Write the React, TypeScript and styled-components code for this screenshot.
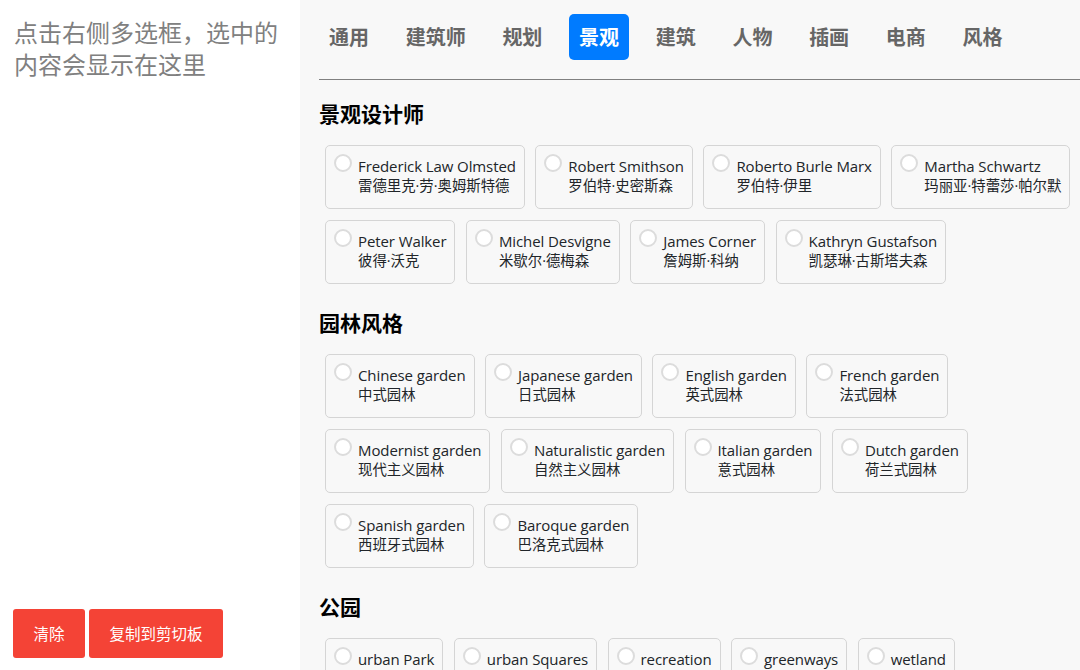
import React from 'react'
import styled, { createGlobalStyle } from 'styled-components'

type Option = {
  en: string
  zh: string
}

type Section = {
  title: string
  options: Option[]
}

const TABS = ['通用', '建筑师', '规划', '景观', '建筑', '人物', '插画', '电商', '风格']

const SECTIONS: Section[] = [
  {
    title: '景观设计师',
    options: [
      { en: 'Frederick Law Olmsted', zh: '雷德里克·劳·奥姆斯特德' },
      { en: 'Robert Smithson', zh: '罗伯特·史密斯森' },
      { en: 'Roberto Burle Marx', zh: '罗伯特·伊里' },
      { en: 'Martha Schwartz', zh: '玛丽亚·特蕾莎·帕尔默' },
      { en: 'Peter Walker', zh: '彼得·沃克' },
      { en: 'Michel Desvigne', zh: '米歇尔·德梅森' },
      { en: 'James Corner', zh: '詹姆斯·科纳' },
      { en: 'Kathryn Gustafson', zh: '凯瑟琳·古斯塔夫森' },
    ],
  },
  {
    title: '园林风格',
    options: [
      { en: 'Chinese garden', zh: '中式园林' },
      { en: 'Japanese garden', zh: '日式园林' },
      { en: 'English garden', zh: '英式园林' },
      { en: 'French garden', zh: '法式园林' },
      { en: 'Modernist garden', zh: '现代主义园林' },
      { en: 'Naturalistic garden', zh: '自然主义园林' },
      { en: 'Italian garden', zh: '意式园林' },
      { en: 'Dutch garden', zh: '荷兰式园林' },
      { en: 'Spanish garden', zh: '西班牙式园林' },
      { en: 'Baroque garden', zh: '巴洛克式园林' },
    ],
  },
  {
    title: '公园',
    options: [
      { en: 'urban Park', zh: '城市公园' },
      { en: 'urban Squares', zh: '城市广场' },
      { en: 'recreation', zh: '休闲娱乐' },
      { en: 'greenways', zh: '绿道' },
      { en: 'wetland', zh: '湿地' },
    ],
  },
]

const GlobalStyle = createGlobalStyle`
  html, body {
    margin: 0;
    height: 100%;
    overflow: hidden;
    background: #fff;
  }
  body {
    font-family: "Open Sans", "Noto Sans CJK SC", sans-serif;
  }
`

const Page = styled.div`
  display: flex;
  width: 1080px;
  height: 670px;
  overflow: hidden;
`

const Sidebar = styled.aside`
  display: flex;
  flex-direction: column;
  justify-content: space-between;
  flex: 0 0 300px;
  box-sizing: border-box;
  padding: 17px 13px 12px;
  background: #fff;
`

const Hint = styled.div`
  margin-left: 1px;
  color: #808080;
  font-size: 24px;
  line-height: 32px;
`

const Actions = styled.div`
  display: flex;
  gap: 4px;
`

const RedButton = styled.button`
  height: 49px;
  padding: 0 20.5px;
  border: 0;
  border-radius: 3px;
  background: #f44336;
  color: #fff;
  font-family: inherit;
  font-size: 15.5px;
`

const Main = styled.main`
  flex: 1;
  box-sizing: border-box;
  padding: 14px 0 0 19px;
  background: #f8f8f8;
`

const TabBar = styled.nav`
  display: flex;
  gap: 16.7px;
  height: 66px;
  box-sizing: border-box;
  border-bottom: 1px solid #808080;
`

const Tab = styled.div<{ $active?: boolean }>`
  box-sizing: border-box;
  height: 46px;
  padding: 0 10px;
  border-radius: 5px;
  background: ${({ $active }) => ($active ? '#007bff' : 'transparent')};
  color: ${({ $active }) => ($active ? '#fff' : '#666')};
  font-size: 20px;
  font-weight: 700;
  line-height: 47px;
`

const Group = styled.section`
  margin-top: 17px;

  & + & {
    margin-top: 22px;
  }
`

const Heading = styled.h2`
  margin: 0 0 14px;
  color: #000;
  font-size: 21px;
  font-weight: 700;
  line-height: 34px;
`

const Options = styled.div`
  display: flex;
  flex-wrap: wrap;
  gap: 11px 10.5px;
  padding-left: 6px;
`

const Card = styled.label`
  display: flex;
  box-sizing: border-box;
  height: 64px;
  padding: 8px 8px 0;
  border: 1px solid #d5d5d5;
  border-radius: 5px;
`

const Check = styled.input`
  flex: none;
  box-sizing: border-box;
  width: 18px;
  height: 18px;
  margin: 0 6px 0 0;
  border: 2px solid #dcdcdc;
  border-radius: 50%;
  background: #fff;
  appearance: none;
`

const Names = styled.div`
  padding-top: 3px;
  color: #212529;
`

const English = styled.div`
  font-size: 15px;
  letter-spacing: -0.1px;
  line-height: 19px;
  white-space: nowrap;
`

const Chinese = styled.div`
  font-size: 14.4px;
  line-height: 20px;
  white-space: nowrap;
`

const App: React.FC = () => {
  return (
    <Page>
      <GlobalStyle />
      <Sidebar>
        <Hint>点击右侧多选框，选中的内容会显示在这里</Hint>
        <Actions>
          <RedButton>清除</RedButton>
          <RedButton>复制到剪切板</RedButton>
        </Actions>
      </Sidebar>
      <Main>
        <TabBar>
          {TABS.map(tab => (
            <Tab key={tab} $active={tab === '景观'}>
              {tab}
            </Tab>
          ))}
        </TabBar>
        {SECTIONS.map(section => (
          <Group key={section.title}>
            <Heading>{section.title}</Heading>
            <Options>
              {section.options.map(option => (
                <Card key={option.en}>
                  <Check type="checkbox" />
                  <Names>
                    <English>{option.en}</English>
                    <Chinese>{option.zh}</Chinese>
                  </Names>
                </Card>
              ))}
            </Options>
          </Group>
        ))}
      </Main>
    </Page>
  )
}

export default App
